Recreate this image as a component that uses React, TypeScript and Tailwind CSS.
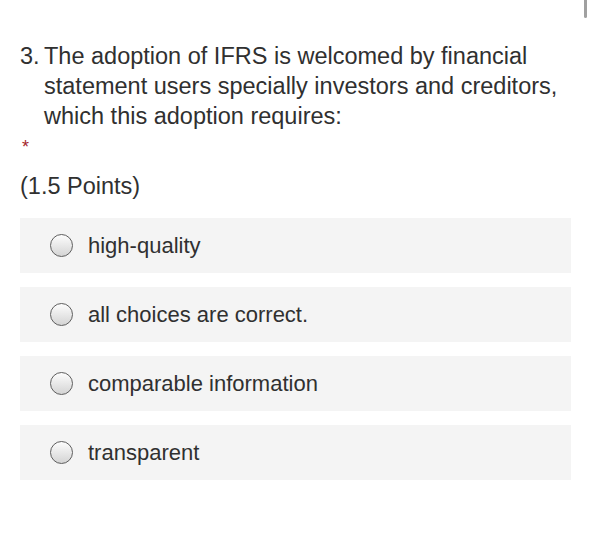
const CHOICES = [
  "high-quality",
  "all choices are correct.",
  "comparable information",
  "transparent",
];

function Radio() {
  return (
    <span className="block h-[23px] w-[23px] shrink-0 rounded-full border-[1.5px] border-[#5e5e5e] bg-gradient-to-b from-[#fdfdfd] to-[#d4d4d4]" />
  );
}

export default function App() {
  return (
    <div
      className="relative min-h-[543px] w-[592px] bg-white pl-[20px] pr-[21px] pt-[41px] text-[#303030]"
      style={{ fontFamily: '"Liberation Sans", Arial, sans-serif' }}
    >
      {/* scroll indicator */}
      <div className="absolute right-[5px] top-0 h-[18px] w-[3px] rounded-b-full bg-[#a0a0a0]" />

      <div className="flex text-[23.5px] leading-[30px]">
        <span className="w-[24px] shrink-0">3.</span>
        <span>
          The adoption of IFRS is welcomed by financial statement users specially investors and
          creditors, which this adoption requires:
        </span>
      </div>

      <div className="mt-[6px] pl-[2px] text-[18px] leading-[20px] text-[#a4262c]">*</div>

      <div className="mt-[14px] text-[23.5px] leading-[30px]">(1.5 Points)</div>

      <div className="mt-[17px] flex flex-col gap-[14px]">
        {CHOICES.map((c) => (
          <label
            key={c}
            className="flex h-[55px] items-center gap-[15px] bg-[#f4f4f4] pl-[30px] text-[22px]"
          >
            <Radio />
            <span>{c}</span>
          </label>
        ))}
      </div>
    </div>
  );
}
